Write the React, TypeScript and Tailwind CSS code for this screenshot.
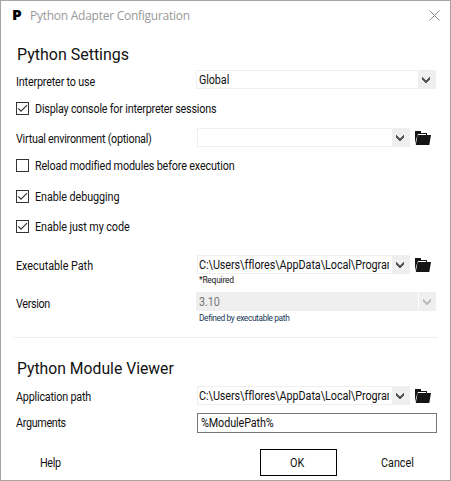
import type { ReactNode } from 'react';

function Chevron({ color = '#555555' }: { color?: string }) {
  return (
    <svg width="8" height="6" viewBox="0 0 8 6" fill={color} shapeRendering="crispEdges">
      <path d="M0 0h1v1h1v1h1v1h2v-1h1v-1h1v-1h1v3h-1v1h-1v1h-1v1h-2v-1h-1v-1h-1v-1h-1z" />
    </svg>
  );
}

function Folder() {
  return (
    <svg width="16" height="14" viewBox="0 0 16 14" className="ml-[5px] shrink-0">
      <path d="M0 0h6v2h6v2h-1V3H3L1.2 8 0 13z" fill="#151515" />
      <path d="M2.6 4H16l-1.7 10H.8z" fill="#151515" />
    </svg>
  );
}

function Label({ children, className = '' }: { children: ReactNode; className?: string }) {
  return <span className={`block origin-left scale-x-90 whitespace-nowrap text-[12px] ${className}`}>{children}</span>;
}

function Combo({ value = '', wide = false, disabled = false, track = '' }: { value?: string; wide?: boolean; disabled?: boolean; track?: string }) {
  return (
    <div className={`flex h-[19px] shrink-0 border ${disabled ? 'border-[#efefef] bg-[#efefef] text-[#777777]' : 'border-[#efefef] bg-white'} ${wide ? 'w-[240px]' : 'ml-px w-[213px]'}`}>
      <div className={`min-w-0 flex-1 overflow-hidden ${wide ? 'pl-[2px]' : 'mr-[3px] pl-px'}`}>
        <Label className={`leading-[18px] ${track}`}>{value}</Label>
      </div>
      <div className={`flex w-[17px] items-center justify-center bg-[#efefef] pr-px ${disabled ? 'border-l border-white' : ''}`}>
        <Chevron color={disabled ? '#bdbdbd' : '#555555'} />
      </div>
    </div>
  );
}

function Check({ label, checked = false, track }: { label: string; checked?: boolean; track: string }) {
  return (
    <div className="flex h-[13px] items-center pl-[15px]">
      <div className="h-[13px] w-[13px] shrink-0 border border-[#333333]">
        {checked && (
          <svg width="11" height="11" viewBox="0 0 11 11" fill="none" stroke="#333333" strokeWidth="1.2">
            <path d="M1.2 5.3 4 8.2 10 2.2" />
          </svg>
        )}
      </div>
      <Label className={`ml-[6px] leading-[14px] ${track}`}>{label}</Label>
    </div>
  );
}

function Field({ label, track, pad = 'pt-[4px]', children }: { label: string; track: string; pad?: string; children: ReactNode }) {
  return (
    <div className="flex h-[19px] pl-[15px]">
      <div className={`w-[180px] shrink-0 ${pad}`}><Label className={`leading-[14px] ${track}`}>{label}</Label></div>
      {children}
    </div>
  );
}

const path = 'C:\\Users\\fflores\\AppData\\Local\\Program';

export default function App() {
  return (
    <div className="flex h-[481px] w-[451px] flex-col overflow-hidden border border-[#a5a5a5] bg-white font-['Roboto','Liberation_Sans',sans-serif] text-[#111111]">
      <header className="flex h-[30px] shrink-0 items-center pl-[11px] pr-[10px]">
        <span className="w-[18px] font-['Open_Sans',sans-serif] text-[14px] font-extrabold leading-[14px] text-black"><span className="block origin-left -translate-y-px scale-x-110">P</span></span>
        <span className="font-['Open_Sans',sans-serif] text-[12px] leading-[16px] tracking-[-0.26px] text-[#999999]">Python Adapter Configuration</span>
        <svg className="-mt-[2px] ml-auto" width="11" height="11" viewBox="0 0 11 11" stroke="#888888" strokeWidth="1">
          <path d="M.5.5l10 10M10.5.5l-10 10" />
        </svg>
      </header>
      <h1 className="ml-[16px] mt-[13px] h-[20px] w-fit shrink-0 origin-left scale-x-[0.94] whitespace-nowrap text-[17px] leading-[20px]">Python Settings</h1>
      <div className="mt-[6px]"><Field pad="pt-[5px]" label="Interpreter to use" track="tracking-[-0.2px]"><Combo wide value="Global" track="tracking-[-0.1px]" /></Field></div>
      <div className="mt-[13px]"><Check checked label="Display console for interpreter sessions" track="tracking-[-0.23px]" /></div>
      <div className="mt-[13px]"><Field label="Virtual environment (optional)" track="tracking-[-0.28px]"><Combo /><div className="pt-[3px]"><Folder /></div></Field></div>
      <div className="mt-[12px]"><Check label="Reload modified modules before execution" track="tracking-[-0.17px]" /></div>
      <div className="mt-[18px]"><Check checked label="Enable debugging" track="tracking-[-0.09px]" /></div>
      <div className="mt-[17px]"><Check checked label="Enable just my code" track="tracking-[-0.1px]" /></div>
      <div className="mt-[22px]"><Field label="Executable Path" track="tracking-[-0.02px]"><Combo value={path} track="tracking-[-0.07px]" /><div className="pt-[3px]"><Folder /></div></Field></div>
      <p className="h-[18px] w-fit origin-left scale-x-[0.93] pt-px ml-[198px] whitespace-nowrap text-[9px] leading-[11px] tracking-[-0.22px]">*Required</p>
      <Field pad="pt-[5px]" label="Version" track="tracking-[-0.4px]"><Combo wide disabled value="3.10" track="tracking-[-0.1px]" /></Field>
      <p className="ml-[198px] h-[26px] w-fit origin-left scale-x-[0.93] whitespace-nowrap pt-[2px] text-[9px] leading-[11px] tracking-[-0.42px] text-[#173757]">Defined by executable path</p>
      <hr className="ml-[12px] w-[425px] border-[#eeeeee]" />
      <h2 className="ml-[16px] mt-[20px] h-[20px] w-fit shrink-0 origin-left scale-x-[0.925] whitespace-nowrap text-[17px] leading-[20px]">Python Module Viewer</h2>
      <div className="mt-[8px]"><Field label="Application path" track="tracking-[-0.23px]"><Combo value={path} track="tracking-[-0.07px]" /><div className="pt-[3px]"><Folder /></div></Field></div>
      <div className="mt-[8px] flex h-[20px] pl-[15px]">
        <div className="w-[181px] shrink-0 pt-[3px]"><Label className="leading-[14px] tracking-[-0.38px]">Arguments</Label></div>
        <div className="h-[20px] w-[240px] border border-[#777777] pl-[3px]"><Label className="leading-[18px] tracking-[-0.12px]">%ModulePath%</Label></div>
      </div>
      <footer className="mt-[16px] flex h-[27px] shrink-0 items-center">
        <div className="w-[220px] pl-[39px]"><Label className="leading-[14px] tracking-[-0.4px]">Help</Label></div>
        <div className="ml-[39px] flex h-[27px] w-[77px] items-center justify-center border border-black pr-px"><Label>OK</Label></div>
        <Label className="ml-[44px] leading-[14px]">Cancel</Label>
      </footer>
    </div>
  );
}
